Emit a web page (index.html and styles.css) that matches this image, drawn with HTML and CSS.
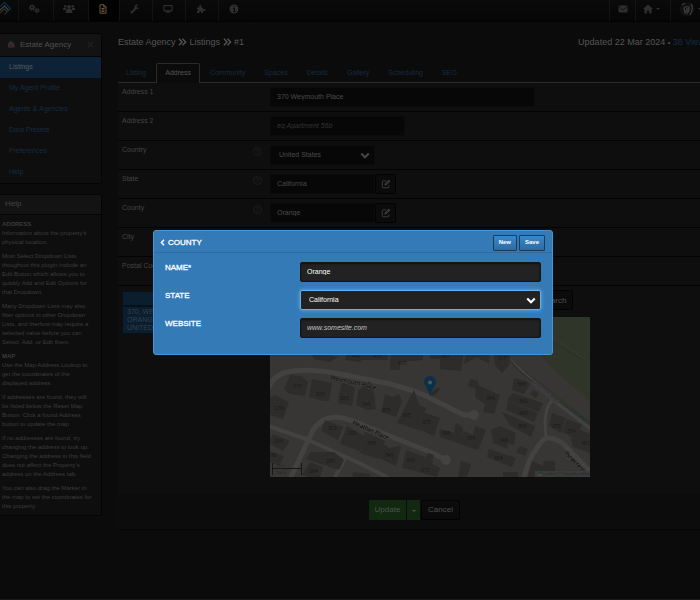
FILE: index.html
```html
<!DOCTYPE html>
<html lang="en">
<head>
<meta charset="utf-8">
<title>Estate Agency - Listings</title>
<link rel="stylesheet" href="styles.css">
</head>
<body>
<svg class="defs" aria-hidden="true">
  <symbol id="edit" viewBox="0 0 16 16"><path d="M8.500 3H3.500Q2 3 2 4.500V12.500Q2 14 3.500 14H11Q12.500 14 12.500 12.500V10" fill="none" stroke="currentColor" stroke-width="1.400"/><path d="M6 7.500 12.500 1 15 3.500 8.500 10 5.500 10.500Z" fill="currentColor"/><path d="M8 8.500 12.500 4" stroke="#0b0b0b" stroke-width="1"/></symbol>
  <symbol id="chev" viewBox="0 0 12 8"><path d="M1.500 1.500 6 6 10.500 1.500" fill="none" stroke="currentColor" stroke-width="2.600"/></symbol>
  <symbol id="help" viewBox="0 0 18 18"><circle cx="9" cy="9" r="8" fill="none" stroke="currentColor" stroke-width="1.500"/><path d="M6.500 7Q6.500 4.800 9 4.800T11.500 7Q11.500 8.200 9 9.500V11M9 12.200V14" fill="none" stroke="currentColor" stroke-width="1.600"/></symbol>
  <symbol id="raquo" viewBox="0 0 10 8"><path d="M1 .5 4.500 4 1 7.500M5 .5 8.500 4 5 7.500" fill="none" stroke="currentColor" stroke-width="1.500"/></symbol>
</svg>
<header class="topbar">
  <a class="brand" href="#" aria-label="Home"><svg viewBox="0 0 18 18"><path d="M-3 9 4.500 2.500 10.500 8.500 4.500 14.500" fill="none" stroke="#0c2f45" stroke-width="1.300"/><path d="M-1 11 4.500 6 8.500 10" fill="none" stroke="#3a4040" stroke-width="1.300"/><path d="M0 13 4.500 9 7 11.500" fill="none" stroke="#3d2b18" stroke-width="1.300"/></svg></a>
  <nav class="nav">
    <a href="#" class="n1" aria-label="Settings"><svg viewBox="0 0 24 20"><g fill="none" stroke="currentColor"><circle cx="8" cy="7" r="3.500" stroke-width="3"/><circle cx="8" cy="7" r="5.500" stroke-width="2" stroke-dasharray="2.200 2.100"/><circle cx="18" cy="13" r="2.800" stroke-width="2.600"/><circle cx="18" cy="13" r="4.500" stroke-width="2" stroke-dasharray="1.800 1.700"/></g></svg></a>
    <a href="#" class="n1" aria-label="Users"><svg viewBox="0 0 24 20"><g fill="currentColor"><circle cx="12" cy="6" r="3.800"/><circle cx="4.500" cy="4.500" r="2.600"/><circle cx="19.500" cy="4.500" r="2.600"/><path d="M5.500 18V14Q6 10 9 10H15Q18 10 18.500 14V18ZM0 12V9.500Q0 7.500 3 7.500H6Q7 10 5 12ZM24 12V9.500Q24 7.500 21 7.500H18Q17 10 19 12Z"/></g></svg></a>
    <a href="#" class="n2 on" aria-label="Content"><svg viewBox="0 0 20 20"><path d="M4 1.500H12L16 5.500V18.500H4ZM11.500 1.500V6H16M7 9H13M7 12H13M7 15H13" fill="none" stroke="currentColor" stroke-width="2"/></svg></a>
    <a href="#" class="n3" aria-label="Tools"><svg viewBox="0 0 20 20"><path d="M3 17 12 8" stroke="currentColor" stroke-width="4" stroke-linecap="round"/><path d="M16.500 2.500A4.500 4.500 0 1 0 18 7L14 8 12 6Z" fill="currentColor"/></svg></a>
    <a href="#" class="n3" aria-label="Theme"><svg viewBox="0 0 22 20"><rect x="2" y="2.500" width="18" height="11.500" rx="1" fill="none" stroke="currentColor" stroke-width="2.500"/><path d="M9 14H13V16H16V18H6V16H9Z" fill="currentColor"/></svg></a>
    <a href="#" class="n3" aria-label="Plugins"><svg viewBox="0 0 20 20"><path d="M2 7H7Q5 2 8.500 2T10 7H14V10.500Q19 8.500 19 12T14 13.500V18H10Q11 14.500 8.500 14.500T7 18H2V14Q5 14 5 12T2 11Z" fill="currentColor"/></svg></a>
    <a href="#" class="n4" aria-label="About"><svg viewBox="0 0 20 20"><circle cx="10" cy="10" r="9" fill="currentColor"/><path d="M8 9H11V15M8 15H13M9 5.500H11.500" stroke="#080808" stroke-width="2" fill="none"/></svg></a>
  </nav>
  <nav class="nav tools">
    <a href="#" class="t1" aria-label="Messages"><svg viewBox="0 0 20 20"><rect x="1" y="3" width="18" height="14" rx="2" fill="currentColor"/><path d="M1 5 10 12 19 5" fill="none" stroke="#0a0a0a" stroke-width="1.500"/></svg></a>
    <a href="#" class="t2" aria-label="Site"><svg viewBox="0 0 20 20"><path d="M10 1 20 10H17V19H12V13H8V19H3V10H0Z" fill="currentColor"/></svg><i class="caret"></i></a>
    <a href="#" class="t3" aria-label="Account"><svg class="avatar" viewBox="0 0 16 16"><circle cx="8" cy="8" r="7.500" fill="#101010"/><path d="M3 4Q5 2 6 3M12 3Q15 7 11 14M5 7Q7 5 10 6V9Q9 13 6 12ZM7 8H10M6 10H9" fill="none" stroke="#3c3c3c" stroke-width="1.300"/></svg><i class="caret"></i></a>
  </nav>
</header>
<div class="page">
  <aside class="side">
    <section class="panel menu">
      <h2><svg class="house" viewBox="0 0 16 16"><path d="M1 8 8 1 15 8V15H2V8Z" fill="#2a3331"/><path d="M6 8H10V15H6Z" fill="#541519"/></svg><span>Estate Agency</span><svg class="fold" viewBox="0 0 8 8"><path d="M1 2 4 4 7 2M1 7 4 5 7 7" fill="none" stroke="currentColor"/></svg></h2>
      <nav>
        <a href="#" class="on">Listings</a><a href="#">My Agent Profile</a><a href="#">Agents &amp; Agencies</a><a href="#">Data Presets</a><a href="#">Preferences</a><a href="#">Help</a>
      </nav>
    </section>
    <section class="panel info">
      <h2>Help</h2>
      <div class="copy">
        <p><b>ADDRESS</b><br>Information about the property's<br>physical location.</p>
        <p>Most Select Dropdown Lists<br>thoughout this plugin include an<br>Edit Button which allows you to<br>quickly Add and Edit Options for<br>that Dropdown.</p>
        <p>Many Dropdown Lists may also<br>filter options in other Dropdown<br>Lists, and therfore may require a<br>selected value before you can<br>Select, Add, or Edit them.</p>
        <p><b>MAP</b><br>Use the Map Address Lookup to<br>get the coordinates of the<br>displayed address.</p>
        <p>If addresses are found, they will<br>be listed below the Reset Map<br>Button. Click a found Address<br>button to update the map</p>
        <p>If no addresses are found, try<br>changing the address to look up.<br>Changing the address in this field<br>does not affect the Property's<br>address on the Address tab.</p>
        <p>You can also drag the Marker in<br>the map to set the coordinates for<br>this property.</p>
      </div>
    </section>
  </aside>
  <main>
    <div class="heading">
      <h1>Estate Agency <svg><use href="#raquo"/></svg> Listings <svg><use href="#raquo"/></svg> #1</h1>
      <p>Updated 22 Mar 2024 <span>•</span> <a href="#">38 Views</a></p>
    </div>
    <nav class="tabs">
      <a href="#">Listing</a><a href="#" class="on">Address</a><a href="#">Community</a><a href="#">Spaces</a><a href="#">Details</a><a href="#">Gallery</a><a href="#">Scheduling</a><a href="#">SEO</a>
    </nav>
    <form class="form">
      <div class="row"><label for="a1">Address 1</label><input id="a1" class="wide" value="370 Weymouth Place"></div>
      <div class="row"><label for="a2">Address 2</label><input id="a2" class="mid" placeholder="eg Apartment 56b"></div>
      <div class="row"><label for="country">Country<svg><use href="#help"/></svg></label><div class="pick"><select id="country"><option>United States</option></select><svg><use href="#chev"/></svg></div></div>
      <div class="row"><label for="state">State<svg><use href="#help"/></svg></label><input id="state" class="short" value="California"><button type="button" class="edit" aria-label="Edit states"><svg><use href="#edit"/></svg></button></div>
      <div class="row"><label for="county">County<svg><use href="#help"/></svg></label><input id="county" class="short" value="Orange"><button type="button" class="edit" aria-label="Edit counties"><svg><use href="#edit"/></svg></button></div>
      <div class="row"><label for="city">City</label><input id="city" class="mid"></div>
      <div class="row"><label for="zip">Postal Code</label><input id="zip" class="mid"></div>
      <div class="lookup">
        <div class="found">
          <button type="button" class="reset" aria-label="Reset map"></button>
          <button type="button" class="hit">370, WEYMOUTH PLACE,<br>ORANGE COUNTY,<br>UNITED STATES</button>
        </div>
        <div class="mapcol">
          <div class="search"><input aria-label="Map address lookup"><button type="button">Search</button></div>
          <svg class="map" viewBox="0 0 320 160" role="img" aria-label="Map of Weymouth Place">
            <rect width="320" height="160" fill="#383634"/>
            <path d="M230 0H320V84L288 57 262 30Z" fill="#30352a"/>
            <path d="M238 41 320 105M250 8 320 46" fill="none" stroke="#293328" stroke-width="1"/>
            <path d="M283 20 320 46" stroke="#4a3b29" stroke-width="1" stroke-dasharray="2 1.500"/>
            <g fill="none" stroke="#434241" stroke-linejoin="round" stroke-linecap="round">
              <path d="M-3 74Q3 58 17 55Q35 51 65 56L120 67Q150 75 162 82L194 98 203 98" stroke-width="5"/>
              <circle cx="204" cy="98" r="3" stroke-width="4"/>
              <path d="M20 162 43 113Q52 100 66 100Q78 101 100 111L160 135 176 143" stroke-width="5"/>
              <circle cx="176" cy="143" r="3" stroke-width="4"/>
              <path d="M-5 108 36 122 87 145 125 164M74 143 62 166" stroke-width="4"/>
              <path d="M253 165Q257 145 266 132T278 121Q290 121 300 134L328 162" stroke-width="5"/>
              <path d="M240 43 283 83 322 113M284 83Q276 86 275 105L276 121" stroke-width="3"/>
            </g>
            <path d="M238 41Q248 55 270 70L322 108" fill="none" stroke="#27342c" stroke-width="1.500"/>
            <g fill="#2d2c2a">
              <path d="M20 58 31 59 38 65 35 79 20 77 14 72ZM42 62 62 66 59 84 53 84 39 80ZM72 65 85 71 82 89 68 86 69 78ZM88 74 99 64 103 70 106 92 97 93 86 88ZM115 77 122 80 129 77 132 84 126 100 111 95ZM138 84 144 73 149 88 156 91 149 113 127 106ZM150 94 170 101 164 119 148 112ZM5 78 19 85 13 102-3 97-2 81Z"/>
              <path d="M55 103 73 110 68 123 51 114ZM77 109 94 119 90 134 70 127ZM95 115 115 124 108 142 90 136ZM112 126 119 131 131 129 126 149 109 141ZM136 133 155 140 150 155 132 151ZM158 136 164 138 162 147 170 151 167 160 148 155ZM41 135 64 135 74 143 69 153 36 142ZM3 117 20 124 13 134-2 126ZM-1 134 14 139 10 148-2 145ZM40 145 53 150 49 163 32 158ZM83 155 100 157 99 162H82Z"/>
              <path d="M85 20H118V43H87ZM121 20H153V43L130 45V53H120ZM160 20H196L191 54 170 52V42H160ZM200 20H220L219 47 207 40 194 47ZM221 20H243L239 48 232 56 225 48ZM40 33 68 40 60 45 44 42ZM77 36H91V45L75 43Z"/>
              <path d="M200 62 208 64 208 68 230 78 224 97 213 95 215 87 205 80 206 72 198 69ZM244 61 257 64 260 68 254 77 242 73ZM243 76 273 86 269 95 237 83ZM238 84 268 96 264 105 236 93ZM232 95 265 109 261 120 241 109 238 105ZM221 113 230 109 246 116 244 128 237 126 238 132 223 126ZM219 132 246 141 242 150 217 140ZM205 109 216 113 208 133 189 127 194 114 203 118ZM186 106 193 111 191 127 170 120 169 112 184 116ZM282 96 296 101 291 116 279 109ZM297 102 312 108 306 122 292 115ZM307 112 321 117 320 136 303 130 301 122ZM191 144 201 147 197 160H188ZM262 144 273 149 273 144H285V160H258ZM233 155H248V162H233ZM263 73 269 76 266 81 260 77ZM250 129 258 132 255 139 246 135Z"/>
            </g>
            <g class="nums">
              <text x="23" y="71">315</text><text x="46" y="79">325</text><text x="70" y="83">333</text><text x="92" y="89">345</text><text x="112" y="95">355</text><text x="132" y="100">365</text><text x="152" y="107">375</text><text x="3" y="93">1250</text><text x="58" y="113">313</text><text x="78" y="118">325</text><text x="97" y="128">335</text><text x="115" y="140">345</text><text x="136" y="145">365</text><text x="151" y="155">375</text><text x="4" y="126">294</text><text x="1" y="140">88</text><text x="56" y="146">295</text><text x="39" y="156">284</text><text x="128" y="48">405</text><text x="82" y="41">445</text><text x="103" y="41">455</text><text x="171" y="41">485</text><text x="228" y="43">515</text><text x="216" y="83">394</text><text x="247" y="69">366</text><text x="249" y="86">362</text><text x="249" y="98">360</text><text x="248" y="111">356</text><text x="229" y="125">348</text><text x="224" y="143">334</text><text x="197" y="123">395</text><text x="172" y="118">385</text><text x="282" y="111">370</text><text x="297" y="116">374</text><text x="311" y="128">380</text>
            </g>
            <g class="streets"><text transform="translate(60 62) rotate(13)">Weymouth Place</text><text transform="translate(82 107) rotate(24)">Heather Place</text><text transform="translate(294 137) rotate(44)">Pinecrest C</text><text class="area" transform="translate(262 67) rotate(39)">Laguna Beach</text></g>
            <ellipse cx="165" cy="75" rx="6" ry="2" fill="#2b2a28" transform="rotate(-40 165 75)"/>
            <path d="M160 79Q158 73 155.500 69Q154 67 154 65A6 6 0 0 1 166 65Q166 67 164.500 69Q162 73 160 79Z" fill="#0c2f4a"/><circle cx="160" cy="65.500" r="2" fill="#55544f"/>
            <path d="M2.500 146V158M2.500 151.500H32M31.500 146V158" fill="none" stroke="#171717"/>
            <text class="tiny" x="6" y="150">30 m</text><text class="tiny" x="6" y="157">100 ft</text>
            <rect x="265" y="154" width="55" height="6" fill="#3c3b3a"/><path d="M268 155.500H272V157H268Z" fill="#173b50"/><path d="M268 157H272V158.500H268Z" fill="#54501c"/>
            <text class="tiny link" x="273" y="158">Leaflet | © OpenStreetMap</text>
          </svg>
        </div>
      </div>
      <div class="actions"><button type="button" class="go">Update</button><button type="button" class="go more" aria-label="More update options"><i class="caret"></i></button><button type="button" class="cancel">Cancel</button></div>
    </form>
  </main>
</div>
<form class="modal" role="dialog" aria-labelledby="mt">
  <header><button type="button" class="back" aria-label="Back"><svg viewBox="0 0 5 7"><path d="M4 .8 1.500 3.500 4 6.200" fill="none" stroke="currentColor" stroke-width="1.500"/></svg></button><h2 id="mt">COUNTY</h2><button type="button">New</button><button type="button">Save</button></header>
  <div class="field"><label for="mn">NAME*</label><input id="mn" value="Orange"></div>
  <div class="field"><label for="ms">STATE</label><div class="pick focus"><select id="ms"><option>California</option></select><svg><use href="#chev"/></svg></div></div>
  <div class="field"><label for="mw">WEBSITE</label><input id="mw" placeholder="www.somesite.com"></div>
</form>
</body>
</html>
```
FILE: styles.css
```css
* { box-sizing: border-box; }
html { overflow: hidden; background: #0b0b0b; }
body { margin: 0; min-width: 712px; min-height: 100vh; background: #0b0b0b; color: #444; font: 7px/9px "Liberation Sans", Arial, sans-serif; border-bottom: 1px solid #1a1a1a; }
h1, h2, p { margin: 0; font-weight: normal; }
a { color: #162c42; text-decoration: none; }
input, select, button { font: inherit; color: inherit; margin: 0; }
.defs { position: absolute; width: 0; height: 0; }
.caret { display: inline-block; border: 2px solid transparent; border-top-color: currentColor; border-bottom: 0; }

.topbar { display: flex; height: 22px; background: linear-gradient(#0a0a0a, #060606); border-bottom: 1px solid #020202; color: #2e2e2e; }
.brand { width: 18px; }
.brand svg { width: 18px; height: 18px; display: block; }
.nav { display: flex; }
.nav a { display: flex; align-items: center; justify-content: center; gap: 3px; padding-bottom: 4px; border-left: 1px solid #131313; color: inherit; }
.nav svg { width: 10px; height: 10px; }
.nav .n1 { width: 35px; padding-right: 4px; }
.nav .n1 svg { width: 12px; }
.nav .n2 { width: 31px; padding-right: 3px; }
.nav .n3 { width: 33px; padding-right: 2px; }
.nav .n4 { width: 32px; padding-right: 2px; }
.nav .on { background: #020202; color: #69553a; }
.tools { margin-left: auto; }
.tools .t1 { width: 26px; }
.tools .t2 { width: 35px; padding-right: 4px; }
.tools .t3 { width: 42px; justify-content: flex-start; padding-left: 8px; }
.nav .avatar { width: 16px; height: 16px; }

.page { display: flex; align-items: flex-start; gap: 16px; padding-top: 11px; }
.side { flex: 0 0 102px; display: grid; gap: 10px; }
.panel { border: 1px solid #040404; border-left: 0; background: #0e0e0e; border-radius: 0 2px 2px 0; }
.panel h2 { display: flex; align-items: center; font-size: 8px; background: #131313; border-bottom: 1px solid #040404; }
.menu h2 { height: 23px; padding: 0 7px 2px; gap: 5px; color: #505050; }
.menu h2 span { flex: 1; }
.house { width: 8px; height: 8px; }
.fold { width: 7px; height: 8px; color: #292929; }
.menu a { display: block; padding: 5px 9px 7px; }
.menu .on { background: #0d2236; color: #565d64; }
.info h2 { height: 20px; padding: 0 5px 2px; }
.copy { display: grid; gap: 5px; padding: 5px 2px 4px; font-size: 6px; color: #3c3c3c; white-space: nowrap; }
.copy b { font-size: 6px; }

main { flex: 1; min-width: 0; }
.heading { display: flex; justify-content: space-between; height: 30px; padding: 4px 3px 0 0; font-size: 9px; line-height: 11px; color: #565656; }
.heading h1 { font-size: 9px; }
.heading svg { width: 9px; height: 8px; vertical-align: -1px; }
.heading span { font-size: 7px; }
.tabs { display: flex; gap: 1px; height: 20px; border-bottom: 1px solid #2b2b2b; }
.tabs a { padding: 4px 8px 0 7px; border: 1px solid transparent; border-bottom: 0; }
.tabs a + a { padding-left: 8px; }
.tabs .on { color: #565656; border-color: #2b2b2b; border-radius: 2px 2px 0 0; background: #0b0b0b; margin-bottom: -1px; }
.form { background: #0e0e0e; }
.row { display: flex; height: 29px; padding-top: 4px; border-bottom: 1px solid #030303; }
.row label { display: flex; justify-content: space-between; width: 152px; padding: 0 8px 0 4px; }
.row label svg { width: 9px; height: 9px; margin-top: 2px; color: #212121; }
.form input, .form select { height: 20px; padding: 0 6px 1px; border: 1px solid #0b0b0b; border-radius: 2px; background: #070707; color: #4a4a4a; }
.form input::placeholder { color: #333; font-style: italic; opacity: 1; }
.form .wide { width: 265px; }
.form .mid { width: 135px; }
.form .short { width: 105px; }
.pick { display: flex; position: relative; width: 105px; height: 20px; }
.form .pick select { appearance: none; width: 100%; padding: 0 8px 1px; }
.pick svg { position: absolute; right: 5px; top: 7px; width: 10px; height: 7px; pointer-events: none; }
.edit { width: 21px; height: 20px; padding: 0; border: 1px solid #020202; border-radius: 2px; background: #0b0b0b; }
.edit svg { display: block; width: 10px; height: 10px; margin: auto; }

.lookup { display: flex; padding: 4px 0 17px 4px; }
.found { width: 148px; padding-right: 13px; padding-top: 1px; }
.found button { display: block; width: 100%; border: 1px solid #07111b; background: #0b1e2e; color: #34404a; text-align: left; }
.found .reset { height: 15px; }
.found .hit { padding: 0 4px; line-height: 8px; height: 28px; white-space: nowrap; overflow: hidden; }
.search { display: flex; padding-bottom: 7px; }
.search input { width: 264px; }
.search button, .cancel { height: 20px; border: 1px solid #020202; border-radius: 2px; background: #0b0b0b; color: #505050; font-size: 8px; padding: 0 6px; }
.map { display: block; width: 320px; height: 160px; }
.nums text { font: 5px "Open Sans", sans-serif; fill: #171717; }
.streets text { font: 6px "Noto Sans", sans-serif; fill: #030303; stroke: #444; stroke-width: 1px; paint-order: stroke; }
.streets .area { font-size: 5px; fill: #302833; }
.tiny { font-size: 4px; fill: #222; }
.tiny.link { fill: #182d38; }
.actions { display: flex; padding: 6px 0 9px 251px; background: #0c0c0c; border-bottom: 1px solid #040404; }
.actions button { padding-bottom: 2px; }
.go { height: 20px; width: 37px; padding: 0; border: 0; background: #122810; color: #4b5449; font-size: 8px; }
.more { width: 13px; margin-left: 1px; margin-right: 1px; }

.modal { position: absolute; left: 153px; top: 230px; width: 400px; padding-bottom: 8px; border: 1px solid #4595d8; border-radius: 3px; background: #337ab7; color: #fff; font-size: 8px; }
.modal header { display: flex; align-items: center; gap: 2px; height: 22px; padding: 2px 7px 0 6px; margin-bottom: 9px; border-bottom: 1px solid #2e6da4; }
.modal h2 { flex: 1; font-size: 8px; -webkit-text-stroke: 0.3px; }
.modal header button { height: 16px; padding: 0 5px; border: 1px solid #173c5c; border-radius: 1px; background: linear-gradient(#3b87c9, #2d6ca2); font-size: 6px; font-weight: bold; }
.modal header .back { width: 6px; padding: 0; border: 0; background: none; }
.back svg { width: 5px; height: 7px; display: block; }
.field { display: flex; height: 28px; padding: 0 11px; }
.field label { width: 135px; padding-top: 1px; -webkit-text-stroke: 0.3px; }
.field > input, .field .pick { flex: 1; }
.field input, .field select { height: 20px; padding: 0 6px 1px; border: 1px solid #151515; border-radius: 2px; background: #222; color: #fff; font-size: 7px; box-shadow: inset 0 1px 2px #111; }
.field .pick select { appearance: none; width: 100%; padding: 0 8px 1px; }
.field input::placeholder { color: #c4c4c4; font-style: italic; opacity: 1; }
.field .focus select { border-color: #66afe9; outline: 0; box-shadow: 0 0 4px #66afe9; }
```
